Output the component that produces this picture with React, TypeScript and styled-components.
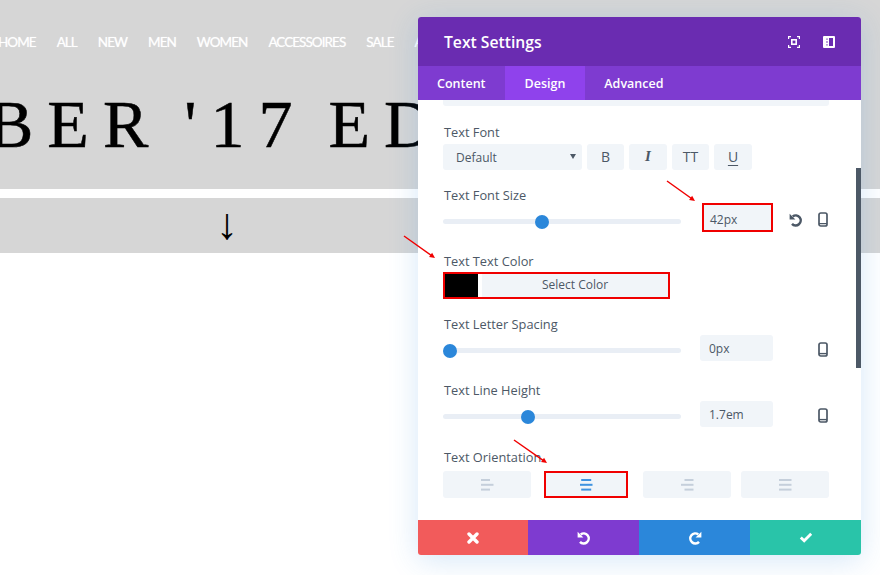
import React from "react";
import styled, { createGlobalStyle } from "styled-components";

const Global = createGlobalStyle`
  html, body { margin: 0; padding: 0; background: #fff; }
  body { width: 880px; height: 575px; overflow: hidden; font-family: "Open Sans", "Noto Sans", sans-serif; }
  * { box-sizing: border-box; }
`;

const Page = styled.div`
  position: relative;
  width: 880px;
  height: 575px;
  overflow: hidden;
  background: #fff;
`;
const Hero = styled.header`
  height: 189px;
  background: #d6d6d6;
  overflow: hidden;
  padding-top: 33px;
`;
const Nav = styled.nav`
  display: flex;
  gap: 21px;
  margin-left: -2px;
  height: 18px;
  align-items: center;
  font-family: "Lato", sans-serif;
  font-size: 13.5px;
  font-weight: 400;
  letter-spacing: -0.95px;
  color: #fff;
  text-shadow: 0 0 1px rgba(255, 255, 255, 0.7);
  white-space: nowrap;
`;
const Headline = styled.h1`
  margin: 33px 0 0 -12px;
  font-family: "Liberation Serif", serif;
  font-weight: 400;
  font-size: 68px;
  line-height: 80px;
  letter-spacing: 14px;
  word-spacing: -9px;
  color: #000;
  -webkit-text-stroke: 0.5px #000;
  white-space: pre;
`;
const ArrowBand = styled.div`
  margin-top: 9px;
  height: 55px;
  background: #d6d6d6;
  display: flex;
  align-items: flex-start;
  padding-left: 216px;
  font-family: "Liberation Serif", serif;
  font-size: 44px;
  line-height: 54px;
  color: #000;
`;

const ModalShadow = styled.div`
  position: absolute;
  left: 418px;
  top: 17px;
  width: 443px;
  height: 538px;
  border-radius: 3px;
  box-shadow: 0 5px 30px rgba(43, 135, 218, 0.2);
`;
const Modal = styled.section`
  position: absolute;
  left: 418px;
  top: 17px;
  width: 443px;
  height: 538px;
  display: flex;
  flex-direction: column;
  border-radius: 3px;
  overflow: hidden;
  background: #fff;
`;
const TitleBar = styled.div`
  height: 49px;
  flex: none;
  background: #6a2cb1;
  display: flex;
  align-items: center;
  padding: 0 26px;
  color: #fff;
`;
const Title = styled.h2`
  margin: 0;
  flex: 1;
  font-size: 15.7px;
  font-weight: 600;
`;
const HeadIcons = styled.div`
  display: flex;
  gap: 23px;
  align-items: center;
`;
const Tabs = styled.div`
  height: 34px;
  flex: none;
  background: #7e3bd0;
  display: flex;
`;
const Tab = styled.div<{ $active?: boolean }>`
  display: flex;
  align-items: center;
  justify-content: center;
  padding: 0 ${(p) => (p.$active ? 20 : 19)}px;
  font-size: 12.5px;
  font-weight: 600;
  color: #fff;
  background: ${(p) => (p.$active ? "#8f42ec" : "transparent")};
`;
const Body = styled.div`
  flex: 1;
  position: relative;
  overflow: hidden;
  padding: 0 32px 0 25px;
`;
const Stub = styled.div`
  height: 6px;
  background: #f1f5f9;
  border-radius: 0 0 3px 3px;
  margin-bottom: 17px;
`;
const Field = styled.div<{ $after: number }>`
  margin-bottom: ${(p) => p.$after}px;
`;
const Label = styled.div<{ $gap: number }>`
  font-size: 12.8px;
  line-height: 18px;
  padding-left: 1px;
  color: #4c5866;
  margin-bottom: ${(p) => p.$gap}px;
`;
const FontRow = styled.div`
  display: flex;
  gap: 5px;
`;
const Select = styled.div`
  width: 139px;
  height: 26px;
  background: #f1f5f9;
  border-radius: 3px;
  color: #4c5866;
  font-size: 12px;
  padding: 0 6px 0 13px;
  display: flex;
  align-items: center;
  justify-content: space-between;
`;
const Caret = styled.span`
  width: 0;
  height: 0;
  border-left: 3px solid transparent;
  border-right: 3px solid transparent;
  border-top: 5px solid #4c5866;
  margin-top: -2px;
`;
const StyleBtn = styled.div<{ $w: number }>`
  width: ${(p) => p.$w}px;
  height: 26px;
  padding-bottom: 2px;
  background: #f1f5f9;
  border-radius: 3px;
  display: flex;
  align-items: center;
  justify-content: center;
  color: #4c5866;
  font-size: 14px;
  font-weight: 500;
`;
const ItalicGlyph = styled.span`
  font-family: "Liberation Serif", serif;
  font-style: italic;
  font-weight: 700;
  font-size: 15px;
`;
const UnderGlyph = styled.span`
  text-decoration: underline;
  text-decoration-thickness: 1px;
  text-underline-offset: 3px;
`;
const SliderRow = styled.div<{ $h: number }>`
  display: flex;
  align-items: flex-start;
  height: ${(p) => p.$h}px;
`;
const Track = styled.div<{ $top: number }>`
  position: relative;
  width: 238px;
  height: 5px;
  margin-top: ${(p) => p.$top}px;
  border-radius: 3px;
  background: #e9eef5;
  flex: none;
`;
const Thumb = styled.span`
  position: absolute;
  top: -4.5px;
  width: 14px;
  height: 14px;
  border-radius: 50%;
  background: #2b87da;
`;
const ValueBox = styled.div<{ $marked?: boolean }>`
  margin-left: ${(p) => (p.$marked ? 21 : 19)}px;
  width: ${(p) => (p.$marked ? 71 : 73)}px;
  height: ${(p) => (p.$marked ? 29 : 26)}px;
  background: #f1f5f9;
  border-radius: ${(p) => (p.$marked ? 0 : 3)}px;
  border: ${(p) => (p.$marked ? "2px solid #f00000" : "none")};
  font-size: 12px;
  color: #4c5866;
  display: flex;
  align-items: center;
  padding-left: ${(p) => (p.$marked ? 6 : 9)}px;
  padding-top: ${(p) => (p.$marked ? 3 : 0)}px;
  flex: none;
`;
const RowIcons = styled.div<{ $top: number }>`
  display: flex;
  align-items: center;
  justify-content: flex-end;
  width: 55px;
  margin-top: ${(p) => p.$top}px;
  gap: 15px;
  flex: none;
`;
const ColorRow = styled.div`
  width: 227px;
  height: 27px;
  border: 2px solid #f00000;
  display: flex;
  background: #fff;
`;
const Swatch = styled.div`
  width: 33px;
  background: #000;
`;
const ColorBtn = styled.div`
  margin-left: 4px;
  flex: 1;
  padding-bottom: 2px;
  background: #f1f5f9;
  display: flex;
  align-items: center;
  justify-content: center;
  color: #4c5866;
  font-size: 12px;
  font-weight: 500;
`;
const AlignRow = styled.div`
  display: flex;
  height: 27px;
`;
const AlignBtn = styled.div<{ $w: number; $left: number; $marked?: boolean }>`
  width: ${(p) => p.$w}px;
  margin-left: ${(p) => p.$left}px;
  background: #f1f5f9;
  border-radius: ${(p) => (p.$marked ? 0 : 3)}px;
  border: ${(p) => (p.$marked ? "2px solid #f00000" : "none")};
  display: flex;
  align-items: center;
  justify-content: center;
`;
const Scrollbar = styled.div`
  position: absolute;
  right: 0;
  top: 68px;
  width: 5px;
  height: 200px;
  background: #4c5866;
`;
const Footer = styled.div`
  height: 35px;
  flex: none;
  display: grid;
  grid-template-columns: 110px 111px 111px 111px;
`;
const FootBtn = styled.div<{ $bg: string }>`
  background: ${(p) => p.$bg};
  display: flex;
  align-items: center;
  justify-content: center;
`;
const Annotations = styled.svg`
  position: absolute;
  left: 0;
  top: 0;
  pointer-events: none;
`;

const Mobile = () => (
  <svg width="10" height="15" viewBox="0 0 10 15" fill="none">
    <rect x="1" y="1" width="8" height="13" rx="1.8" stroke="#4c5866" strokeWidth="1.7" />
    <path d="M1 11.6h8" stroke="#4c5866" strokeWidth="1.4" />
  </svg>
);

const Focus = () => (
  <svg width="12" height="12" viewBox="0 0 12 12" fill="none" stroke="#fff" strokeWidth="1.2">
    <path d="M0.6 3V0.6H3M9 0.6h2.4V3M11.4 9v2.4H9M3 11.4H0.6V9" />
    <rect x="3.8" y="3.8" width="4.4" height="4.4" strokeWidth="1.6" />
  </svg>
);

const Sidebar = () => (
  <svg width="12" height="12" viewBox="0 0 12 12">
    <path
      fill="#fff"
      fillRule="evenodd"
      d="M1 0h10a1 1 0 0 1 1 1v10a1 1 0 0 1-1 1H1a1 1 0 0 1-1-1V1a1 1 0 0 1 1-1zM6 2v8h4V2zM3.4 2.4v1.4h1.2V2.4zM3.4 5.3v1.4h1.2V5.3zM3.4 8.2v1.4h1.2V8.2z"
    />
  </svg>
);

const UndoIcon = ({ color, flip }: { color: string; flip?: boolean }) => (
  <svg width="14" height="14" viewBox="0 0 14 14" fill="none" transform={flip ? "scale(-1 1)" : undefined}>
    <path d="M3.7 3.4A5 5 0 1 1 3 10.8" stroke={color} strokeWidth="2.5" />
    <path d="M0.6 0.8V6.6H6.4Z" fill={color} />
  </svg>
);

const CloseIcon = () => (
  <svg width="12" height="12" viewBox="0 0 12 12">
    <path d="M2 2L10 10M10 2L2 10" stroke="#fff" strokeWidth="3.4" strokeLinecap="round" />
  </svg>
);

const CheckIcon = () => (
  <svg width="14" height="11" viewBox="0 0 14 11" fill="none">
    <path d="M1.8 5.4L5.2 8.8L12.2 1.8" stroke="#fff" strokeWidth="2.8" />
  </svg>
);

const AlignIcon = ({ kind, color }: { kind: "left" | "center" | "right" | "justify"; color: string }) => {
  const lines =
    kind === "left"
      ? [[0, 9], [0, 12.5], [0, 9]]
      : kind === "center"
      ? [[1.2, 10], [0, 12.5], [1.2, 10]]
      : kind === "right"
      ? [[3.5, 9], [0, 12.5], [3.5, 9]]
      : [[0, 12.5], [0, 12.5], [0, 12.5]];
  return (
    <svg width="13" height="12" viewBox="0 0 13 12">
      {lines.map(([x, w], i) => (
        <rect key={i} x={x} y={i * 4.8} width={w} height="2" fill={color} />
      ))}
    </svg>
  );
};

const Arrow = ({ x1, y1, x2, y2 }: { x1: number; y1: number; x2: number; y2: number }) => {
  const a = Math.atan2(y2 - y1, x2 - x1);
  const len = 6;
  const p1 = [x2 - len * Math.cos(a - 0.45), y2 - len * Math.sin(a - 0.45)];
  const p2 = [x2 - len * Math.cos(a + 0.45), y2 - len * Math.sin(a + 0.45)];
  return (
    <g>
      <line x1={x1} y1={y1} x2={x2 - 3 * Math.cos(a)} y2={y2 - 3 * Math.sin(a)} stroke="#f00000" strokeWidth="1.5" />
      <polygon points={`${x2},${y2} ${p1[0]},${p1[1]} ${p2[0]},${p2[1]}`} fill="#f00000" />
    </g>
  );
};

const navItems = ["HOME", "ALL", "NEW", "MEN", "WOMEN", "ACCESSOIRES", "SALE", "ABOUT"];

export default function App() {
  return (
    <Page>
      <Global />
      <Hero>
        <Nav>
          {navItems.map((n) => (
            <span key={n}>{n}</span>
          ))}
        </Nav>
        <Headline>BER '17 ED</Headline>
      </Hero>
      <ArrowBand>↓</ArrowBand>
      <ModalShadow />
      <Modal>
        <TitleBar>
          <Title>Text Settings</Title>
          <HeadIcons>
            <Focus />
            <Sidebar />
          </HeadIcons>
        </TitleBar>
        <Tabs>
          <Tab>Content</Tab>
          <Tab $active>Design</Tab>
          <Tab>Advanced</Tab>
        </Tabs>
        <Body>
          <Stub />
          <Field $after={16}>
            <Label $gap={3}>Text Font</Label>
            <FontRow>
              <Select>
                Default
                <Caret />
              </Select>
              <StyleBtn $w={37}>B</StyleBtn>
              <StyleBtn $w={38}>
                <ItalicGlyph>I</ItalicGlyph>
              </StyleBtn>
              <StyleBtn $w={37}>TT</StyleBtn>
              <StyleBtn $w={38}>
                <UnderGlyph>U</UnderGlyph>
              </StyleBtn>
            </FontRow>
          </Field>
          <Field $after={20}>
            <Label $gap={-1}>Text Font Size</Label>
            <SliderRow $h={29}>
              <Track $top={16}>
                <Thumb style={{ left: 92 }} />
              </Track>
              <ValueBox $marked>42px</ValueBox>
              <RowIcons $top={9}>
                <UndoIcon color="#4c5866" />
                <Mobile />
              </RowIcons>
            </SliderRow>
          </Field>
          <Field $after={16}>
            <Label $gap={2}>Text Text Color</Label>
            <ColorRow>
              <Swatch />
              <ColorBtn>Select Color</ColorBtn>
            </ColorRow>
          </Field>
          <Field $after={20}>
            <Label $gap={2}>Text Letter Spacing</Label>
            <SliderRow $h={26}>
              <Track $top={13}>
                <Thumb style={{ left: 0 }} />
              </Track>
              <ValueBox>0px</ValueBox>
              <RowIcons $top={7}>
                <Mobile />
              </RowIcons>
            </SliderRow>
          </Field>
          <Field $after={21}>
            <Label $gap={2}>Text Line Height</Label>
            <SliderRow $h={26}>
              <Track $top={13}>
                <Thumb style={{ left: 78 }} />
              </Track>
              <ValueBox>1.7em</ValueBox>
              <RowIcons $top={7}>
                <Mobile />
              </RowIcons>
            </SliderRow>
          </Field>
          <Field $after={0}>
            <Label $gap={5}>Text Orientation</Label>
            <AlignRow>
              <AlignBtn $w={88} $left={0}>
                <AlignIcon kind="left" color="#c5cfdb" />
              </AlignBtn>
              <AlignBtn $w={84} $left={13} $marked>
                <AlignIcon kind="center" color="#3f93e0" />
              </AlignBtn>
              <AlignBtn $w={88} $left={15}>
                <AlignIcon kind="right" color="#c5cfdb" />
              </AlignBtn>
              <AlignBtn $w={88} $left={10}>
                <AlignIcon kind="justify" color="#c5cfdb" />
              </AlignBtn>
            </AlignRow>
          </Field>
          <Scrollbar />
        </Body>
        <Footer>
          <FootBtn $bg="#f25b5b">
            <CloseIcon />
          </FootBtn>
          <FootBtn $bg="#7e3bd0">
            <UndoIcon color="#fff" />
          </FootBtn>
          <FootBtn $bg="#2b87da">
            <UndoIcon color="#fff" flip />
          </FootBtn>
          <FootBtn $bg="#29c4a9">
            <CheckIcon />
          </FootBtn>
        </Footer>
      </Modal>
      <Annotations width="880" height="575" viewBox="0 0 880 575">
        <Arrow x1={667} y1={181} x2={695} y2={201} />
        <Arrow x1={404} y1={236} x2={435} y2={258} />
        <Arrow x1={514} y1={440} x2={547} y2={463} />
      </Annotations>
    </Page>
  );
}
